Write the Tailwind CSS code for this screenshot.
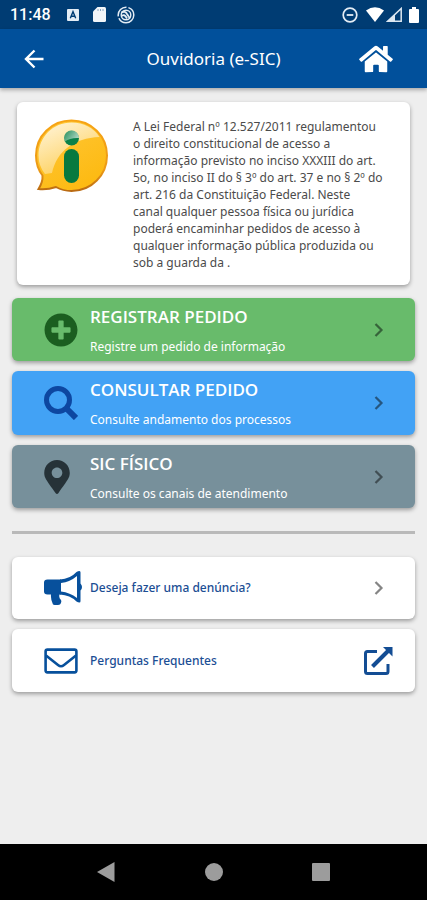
<!DOCTYPE html>
<html lang="pt-BR">
<head>
<meta charset="utf-8">
<meta name="viewport" content="width=device-width, initial-scale=1">
<title>Ouvidoria (e-SIC)</title>
<script src="https://cdn.jsdelivr.net/npm/@tailwindcss/browser@4"></script>
</head>
<body class="flex min-h-screen flex-col bg-[#eeeeee] font-['Noto_Sans','Open_Sans',sans-serif]">

<!-- Status bar -->
<div class="flex h-[29px] items-center bg-[#003c73] pr-2 pl-[10px] font-['Roboto',sans-serif] text-white">
  <span class="w-[57px] pt-px text-base font-medium">11:48</span>
  <svg class="mr-[14px] h-3 w-3" viewBox="0 0 12 12" aria-hidden="true"><rect width="12" height="12" rx="1" fill="#e4edf5"/><path d="M3.3 9.3 6 2.7l2.7 6.6M4.3 7.3h3.4" fill="none" stroke="#003c73" stroke-width="1.4"/></svg>
  <svg class="mr-[11px] h-[15px] w-[13px]" viewBox="0 0 13 15" aria-hidden="true"><path d="M4.500 0H11.500Q13 0 13 1.500V13.500Q13 15 11.500 15H1.500Q0 15 0 13.500V4.500Z" fill="#f1f5f9"/><path d="M5 2v2M7.500 2v2M10 2v2" stroke="#8aa6c2" stroke-width="1"/></svg>
  <svg class="h-[18px] w-[18px]" viewBox="0 0 18 18" fill="none" stroke="#e4edf5" aria-hidden="true"><circle cx="9" cy="9" r="7.800" stroke-width="1.500" stroke-dasharray="21 2 14 2"/><circle cx="9" cy="9" r="4.800" stroke-width="1.400"/><path d="M4.500 6.500Q8 4.500 10 8L13 12.500M5 10q2.500-2.500 5 2.500" stroke-width="1.800"/></svg>
  <svg class="ml-auto h-4 w-4" viewBox="0 0 16 16" fill="none" stroke="#e4edf5" aria-hidden="true"><circle cx="8" cy="8" r="6.800" stroke-width="1.700"/><path d="M4.700 8h6.600" stroke-width="1.800"/></svg>
  <svg class="ml-2 h-[15px] w-[18px]" viewBox="0 0 18 15" aria-hidden="true"><path d="M0 3.500Q9-3 18 3.500L9 15Z" fill="#fff"/></svg>
  <svg class="ml-[2px] h-[15px] w-4" viewBox="0 0 16 15" aria-hidden="true"><path d="M1.800 14.200H15.200V1.500Z" fill="none" stroke="#dce7f1" stroke-width="1.500"/><path d="M1 14.500 9 7v7.500Z" fill="#dce7f1"/></svg>
  <svg class="ml-[7px] h-4 w-[10px]" viewBox="0 0 10 16" aria-hidden="true"><path d="M3 0h4v2h2q1 0 1 1v12q0 1-1 1H1q-1 0-1-1V3q0-1 1-1h2Z" fill="#fff"/></svg>
</div>

<!-- App bar -->
<header class="grid h-[59px] grid-cols-[1fr_auto_1fr] items-center bg-[#01509b] pr-[34px] pl-[22px] text-white shadow-[0_2px_4px_rgba(0,0,0,0.3)]">
  <button type="button" aria-label="Voltar" class="justify-self-start"><svg class="h-6 w-6" viewBox="0 0 24 24" fill="none" stroke="currentColor" stroke-width="2.400"><path d="M21.500 12H4M12.500 3.500 4 12l8.500 8.500"/></svg></button>
  <h1 class="ml-3 text-[17px] leading-6">Ouvidoria (e-SIC)</h1>
  <a href="#" aria-label="Início" class="justify-self-end"><svg class="h-[30px] w-[34px]" viewBox="0 0 576 512" fill="currentColor"><path d="M280.37 148.26L96 300.11V464a16 16 0 0 0 16 16l112.06-.29a16 16 0 0 0 15.92-16V368a16 16 0 0 1 16-16h64a16 16 0 0 1 16 16v95.64a16 16 0 0 0 16 16.05L464 480a16 16 0 0 0 16-16V300L295.67 148.26a12.19 12.19 0 0 0-15.3 0zM571.6 251.47L488 182.56V44.05a12 12 0 0 0-12-12h-56a12 12 0 0 0-12 12v72.61L318.47 43a48 48 0 0 0-61 0L4.34 251.47a12 12 0 0 0-1.6 16.9l25.5 31A12 12 0 0 0 45.15 301l235.22-193.74a12.19 12.19 0 0 1 15.3 0L530.9 301a12 12 0 0 0 16.9-1.6l25.5-31a12 12 0 0 0-1.7-16.93z"/></svg></a>
</header>

<main class="flex grow flex-col px-3 pt-[14px]">
  <section class="mx-[5px] flex gap-[23px] rounded-md bg-white pt-4 pr-6 pb-[14px] pl-[17px] shadow-[0_2px_4px_rgba(0,0,0,0.35)]">
    <svg class="h-[76px] w-[76px] shrink-0" viewBox="0 0 76 76" role="img" aria-label="Informação">
      <defs>
        <linearGradient id="body" x1="0" y1="0" x2="0.6" y2="1"><stop offset="0" stop-color="#ffc83a"/><stop offset="1" stop-color="#fdba12"/></linearGradient>
        <linearGradient id="gloss" x1="0.1" y1="0" x2="0.6" y2="1"><stop offset="0" stop-color="#fff" stop-opacity="0.800"/><stop offset="1" stop-color="#fff" stop-opacity="0.250"/></linearGradient>
        <linearGradient id="edge" x1="0" y1="0" x2="0" y2="1"><stop offset="0" stop-color="#f7a414"/><stop offset="0.700" stop-color="#ec9a16"/><stop offset="1" stop-color="#b96a12"/></linearGradient>
        <linearGradient id="shine" x1="0" y1="0" x2="1" y2="0.500"><stop offset="0" stop-color="#fff" stop-opacity="0.100"/><stop offset="1" stop-color="#fff" stop-opacity="0.650"/></linearGradient>
      </defs>
      <path d="M37.500 2.500C57.500 2.500 73 18 73 37.500S57.500 73 37.500 73Q29 73 22 69Q13 72 4.500 71Q9 64 8.500 57.500Q2 49 2 37.500C2 18 17.500 2.500 37.500 2.500Z" fill="url(#body)" stroke="url(#edge)" stroke-width="2"/>
      <path d="M37.500 4.500C50 4.500 60 10 65.500 19C40 20 23 33 18 55L11 56Q4.500 48 4.500 37.500C4.500 19 19 4.500 37.500 4.500Z" fill="url(#gloss)"/>
      <circle cx="37.500" cy="20" r="7.500" fill="#0a8148"/>
      <path d="M30 20a7.500 7.500 0 0 1 15 0q-9-.5-14 3.500-1-1.500-1-3.500Z" fill="url(#shine)"/>
      <rect x="30" y="31" width="15" height="34" rx="7.500" fill="#08793f"/>
    </svg>
    <p class="text-xs leading-[17px] text-[#4b4b4b]">A Lei Federal nº 12.527/2011 regulamentou o direito constitucional de acesso a informação previsto no inciso XXXIII do art. 5o, no inciso II do § 3º do art. 37 e no § 2º do art. 216 da Constituição Federal. Neste<br>canal qualquer pessoa física ou jurídica<br>poderá encaminhar pedidos de acesso à<br>qualquer informação pública produzida ou sob a guarda da .</p>
  </section>

  <nav class="mt-[13px] flex flex-col gap-[10px] text-white" aria-label="Serviços">
    <a href="#" class="flex h-[63px] items-center rounded-md bg-[#68bb6b] pr-7 pl-8 shadow-[0_2px_4px_rgba(0,0,0,0.35)]">
      <svg class="mr-3 h-[34px] w-[34px] shrink-0" viewBox="0 0 512 512" fill="#1b5e20" aria-hidden="true"><path d="M256 8C119 8 8 119 8 256s111 248 248 248 248-111 248-248S393 8 256 8zm144 276c0 6.600-5.400 12-12 12h-92v92c0 6.600-5.400 12-12 12h-56c-6.600 0-12-5.400-12-12v-92h-92c-6.600 0-12-5.400-12-12v-56c0-6.600 5.400-12 12-12h92v-92c0-6.600 5.400-12 12-12h56c6.600 0 12 5.400 12 12v92h92c6.600 0 12 5.400 12 12v56z"/></svg>
      <span class="flex grow flex-col gap-2 pt-[2px]"><span class="font-['Open_Sans','Noto_Sans',sans-serif] text-[17px] leading-6 font-semibold">REGISTRAR PEDIDO</span><span class="text-xs leading-5">Registre um pedido de informação</span></span>
      <svg class="h-4 w-4 shrink-0" viewBox="0 0 16 16" fill="none" stroke="#36633a" stroke-width="2.200" aria-hidden="true"><path d="M4.500 2 10.500 8l-6 6"/></svg>
    </a>
    <a href="#" class="flex h-[64px] items-center rounded-md bg-[#42a2f5] pr-7 pl-8 shadow-[0_2px_4px_rgba(0,0,0,0.35)]">
      <svg class="mr-3 h-[34px] w-[34px] shrink-0" viewBox="0 0 34 34" fill="none" stroke="#0d47a1" aria-hidden="true"><circle cx="14" cy="14" r="11.500" stroke-width="5"/><path d="M22 22 32 32" stroke-width="6"/></svg>
      <span class="flex grow flex-col gap-2 pt-[2px]"><span class="font-['Open_Sans','Noto_Sans',sans-serif] text-[17px] leading-6 font-semibold">CONSULTAR PEDIDO</span><span class="text-xs leading-5">Consulte andamento dos processos</span></span>
      <svg class="h-4 w-4 shrink-0" viewBox="0 0 16 16" fill="none" stroke="#25567f" stroke-width="2.200" aria-hidden="true"><path d="M4.500 2 10.500 8l-6 6"/></svg>
    </a>
    <a href="#" class="flex h-[63px] items-center rounded-md bg-[#77909b] pr-7 pl-8 shadow-[0_2px_4px_rgba(0,0,0,0.35)]">
      <svg class="mr-5 h-[34px] w-[26px] shrink-0" viewBox="0 0 384 512" fill="#263238" aria-hidden="true"><path d="M172.268 501.670C26.970 291.031 0 269.413 0 192 0 85.961 85.961 0 192 0s192 85.961 192 192c0 77.413-26.970 99.031-172.268 309.670-9.535 13.774-29.930 13.773-39.464 0zM192 272c44.183 0 80-35.817 80-80s-35.817-80-80-80-80 35.817-80 80 35.817 80 80 80z"/></svg>
      <span class="flex grow flex-col gap-2 pt-[2px]"><span class="font-['Open_Sans','Noto_Sans',sans-serif] text-[17px] leading-6 font-semibold">SIC FÍSICO</span><span class="text-xs leading-5">Consulte os canais de atendimento</span></span>
      <svg class="h-4 w-4 shrink-0" viewBox="0 0 16 16" fill="none" stroke="#414e54" stroke-width="2.200" aria-hidden="true"><path d="M4.500 2 10.500 8l-6 6"/></svg>
    </a>
  </nav>

  <hr class="my-[23px] border-t-3 border-[#b9b9b9]">

  <nav class="flex flex-col gap-[10px] text-xs font-medium text-[#1b4e94]" aria-label="Ajuda">
    <a href="#" class="flex h-[62px] items-center rounded-md bg-white pr-7 pl-8 shadow-[0_2px_4px_rgba(0,0,0,0.35)]">
      <svg class="mr-2 h-[34px] w-[38px] shrink-0" viewBox="0 0 38 34" fill="#07509c" aria-hidden="true"><path d="M3.500 8.500H17V23.500H15.500Q14.500 26.500 17 29Q18 31 16 33.500Q12 34.500 9 33.500Q6.500 28.500 7 23.500H3.500Q0 23.500 0 20.500V11.500Q0 8.500 3.500 8.500Z"/><path fill-rule="evenodd" d="M16 8.500Q26 8 32.500 1Q34 0 35.500 0Q36.500 0 36.500 1.500V12.500Q38 14 38 16Q38 18 36.500 19.500V30Q36.500 31.500 35.500 31.500Q34 31.500 32.500 30.500Q26 24 16 23.500ZM17 12V20.500Q26 21.500 33 27V5Q26 11 17 12Z"/></svg>
      <span class="grow">Deseja fazer uma denúncia?</span>
      <svg class="h-4 w-4 shrink-0" viewBox="0 0 16 16" fill="none" stroke="#858585" stroke-width="2.200" aria-hidden="true"><path d="M4.500 2 10.500 8l-6 6"/></svg>
    </a>
    <a href="#" class="flex h-[63px] items-center rounded-md bg-white pr-[22px] pl-8 shadow-[0_2px_4px_rgba(0,0,0,0.35)]">
      <svg class="mr-3 h-[26px] w-[34px] shrink-0" viewBox="0 0 34 26" fill="none" stroke="#07509c" stroke-width="2.600" stroke-linejoin="round" aria-hidden="true"><rect x="1.600" y="1.600" width="30.800" height="22.800" rx="1.800"/><path d="M2 7.500 14 17Q17 19.500 20 17L32 7.500"/></svg>
      <span class="grow">Perguntas Frequentes</span>
      <svg class="h-[30px] w-[30px] shrink-0" viewBox="0 0 30 30" fill="none" stroke="#134d94" aria-hidden="true"><path d="M14 5.500H4.500Q2.500 5.500 2.500 7.500V25.500Q2.500 27.500 4.500 27.500H23Q25 27.500 25 25.500V18" stroke-width="3"/><path d="M9.500 20.500 25 5" stroke-width="4"/><path d="M20 1H29.500V10.500Z" fill="#134d94" stroke="none"/></svg>
    </a>
  </nav>
</main>

<!-- System navigation -->
<div class="flex h-[56px] items-center justify-between bg-black px-[97px]">
  <button type="button" aria-label="Voltar"><svg class="h-5 w-[18px]" viewBox="0 0 18 20" fill="#9c9c9c"><path d="M0 10 17.500 0V20Z"/></svg></button>
  <button type="button" aria-label="Tela inicial" class="h-[18px] w-[18px] rounded-full bg-[#9c9c9c]"></button>
  <button type="button" aria-label="Aplicativos recentes" class="h-[18px] w-[18px] rounded-[1px] bg-[#9c9c9c]"></button>
</div>
</body>
</html>
